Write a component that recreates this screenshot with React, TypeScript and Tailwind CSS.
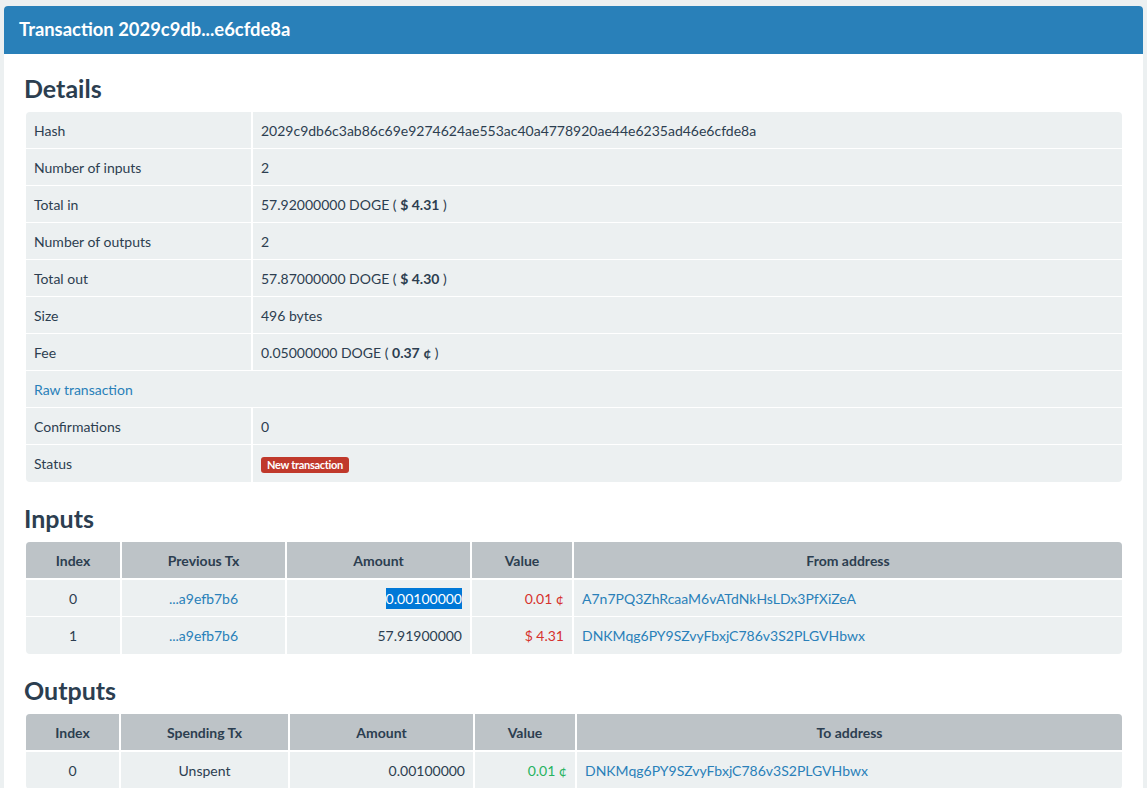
import React from "react";

const font = { fontFamily: "Lato, 'Open Sans', sans-serif" };

function DRow({ label, children, last }: { label: string; children: React.ReactNode; last?: boolean }) {
  return (
    <div className={`flex h-[37px] ${last ? "" : "border-b border-white"}`}>
      <div className="w-[227px] shrink-0 border-r-2 border-white px-2 flex items-center">{label}</div>
      <div className="flex-1 px-2 flex items-center">{children}</div>
    </div>
  );
}

function Heading({ children, first }: { children: React.ReactNode; first?: boolean }) {
  return (
    <h2
      className={`text-[25px] leading-[30px] font-bold text-[#2c3e50] ml-[-2px] mb-[9px] ${first ? "mt-[19px]" : "mt-[21px]"}`}
    >
      {children}
    </h2>
  );
}

type Col = { w?: string; align: string };

function IOTable({ cols, heads, rows }: { cols: Col[]; heads: string[]; rows: React.ReactNode[][] }) {
  return (
    <div className="rounded-[4px] overflow-hidden bg-[#ecf0f1]">
      <div className="flex h-[38px] bg-[#bdc3c7] border-b-2 border-white font-bold">
        {heads.map((h, i) => (
          <div
            key={i}
            className={`${cols[i].w ?? "flex-1"} ${i < heads.length - 1 ? "border-r-2 border-white" : ""} flex items-center justify-center shrink-0`}
          >
            {h}
          </div>
        ))}
      </div>
      {rows.map((r, ri) => (
        <div key={ri} className={`flex h-[37px] ${ri < rows.length - 1 ? "border-b border-white" : ""}`}>
          {r.map((c, i) => (
            <div
              key={i}
              className={`${cols[i].w ?? "flex-1"} ${i < r.length - 1 ? "border-r-2 border-white" : ""} flex items-center px-2 shrink-0 ${cols[i].align}`}
            >
              {c}
            </div>
          ))}
        </div>
      ))}
    </div>
  );
}

const link = "text-[#2980b9]";
const red = "text-[#d6322d]";
const green = "text-[#27b35f]";

export default function App() {
  return (
    <div className="min-h-[788px] bg-[#ecf0f1] pt-[6px] pl-[4px] pr-[4px] text-[14px] text-[#2c3e50]" style={font}>
      <div className="bg-white rounded-t-[4px] overflow-hidden h-[782px]">
        <div className="h-[48px] bg-[#2980b9] px-[15px] flex items-center text-white text-[18.4px] font-bold">
          Transaction 2029c9db...e6cfde8a
        </div>
        <div className="pl-[22px] pr-[21px]">
          <Heading first>Details</Heading>
          <div className="bg-[#ecf0f1] rounded-[4px] overflow-hidden">
            <DRow label="Hash">2029c9db6c3ab86c69e9274624ae553ac40a4778920ae44e6235ad46e6cfde8a</DRow>
            <DRow label="Number of inputs">2</DRow>
            <DRow label="Total in">
              <span>
                57.92000000 DOGE ( <b>$ 4.31</b> )
              </span>
            </DRow>
            <DRow label="Number of outputs">2</DRow>
            <DRow label="Total out">
              <span>
                57.87000000 DOGE ( <b>$ 4.30</b> )
              </span>
            </DRow>
            <DRow label="Size">496 bytes</DRow>
            <DRow label="Fee">
              <span>
                0.05000000 DOGE ( <b>0.37 ¢</b> )
              </span>
            </DRow>
            <div className="flex h-[37px] border-b border-white px-2 items-center">
              <span className={link}>Raw transaction</span>
            </div>
            <DRow label="Confirmations">0</DRow>
            <DRow label="Status" last>
              <span className="mt-[2px] bg-[#c0392b] text-white text-[11px] tracking-[-0.3px] font-bold leading-[16px] px-[6px] rounded-[3px]">
                New transaction
              </span>
            </DRow>
          </div>

          <Heading>Inputs</Heading>
          <IOTable
            cols={[
              { w: "w-[96px]", align: "justify-center" },
              { w: "w-[165px]", align: "justify-center" },
              { w: "w-[185px]", align: "justify-end" },
              { w: "w-[102px]", align: "justify-end" },
              { align: "justify-start" },
            ]}
            heads={["Index", "Previous Tx", "Amount", "Value", "From address"]}
            rows={[
              [
                "0",
                <span className={link}>...a9efb7b6</span>,
                <span className="bg-[#0078d7] text-white">0.00100000</span>,
                <span className={red}>0.01 ¢</span>,
                <span className={link}>A7n7PQ3ZhRcaaM6vATdNkHsLDx3PfXiZeA</span>,
              ],
              [
                "1",
                <span className={link}>...a9efb7b6</span>,
                "57.91900000",
                <span className={red}>$ 4.31</span>,
                <span className={link}>DNKMqg6PY9SZvyFbxjC786v3S2PLGVHbwx</span>,
              ],
            ]}
          />

          <Heading>Outputs</Heading>
          <IOTable
            cols={[
              { w: "w-[95px]", align: "justify-center" },
              { w: "w-[169px]", align: "justify-center" },
              { w: "w-[185px]", align: "justify-end" },
              { w: "w-[102px]", align: "justify-end" },
              { align: "justify-start" },
            ]}
            heads={["Index", "Spending Tx", "Amount", "Value", "To address"]}
            rows={[
              [
                "0",
                "Unspent",
                "0.00100000",
                <span className={green}>0.01 ¢</span>,
                <span className={link}>DNKMqg6PY9SZvyFbxjC786v3S2PLGVHbwx</span>,
              ],
            ]}
          />
        </div>
      </div>
    </div>
  );
}
